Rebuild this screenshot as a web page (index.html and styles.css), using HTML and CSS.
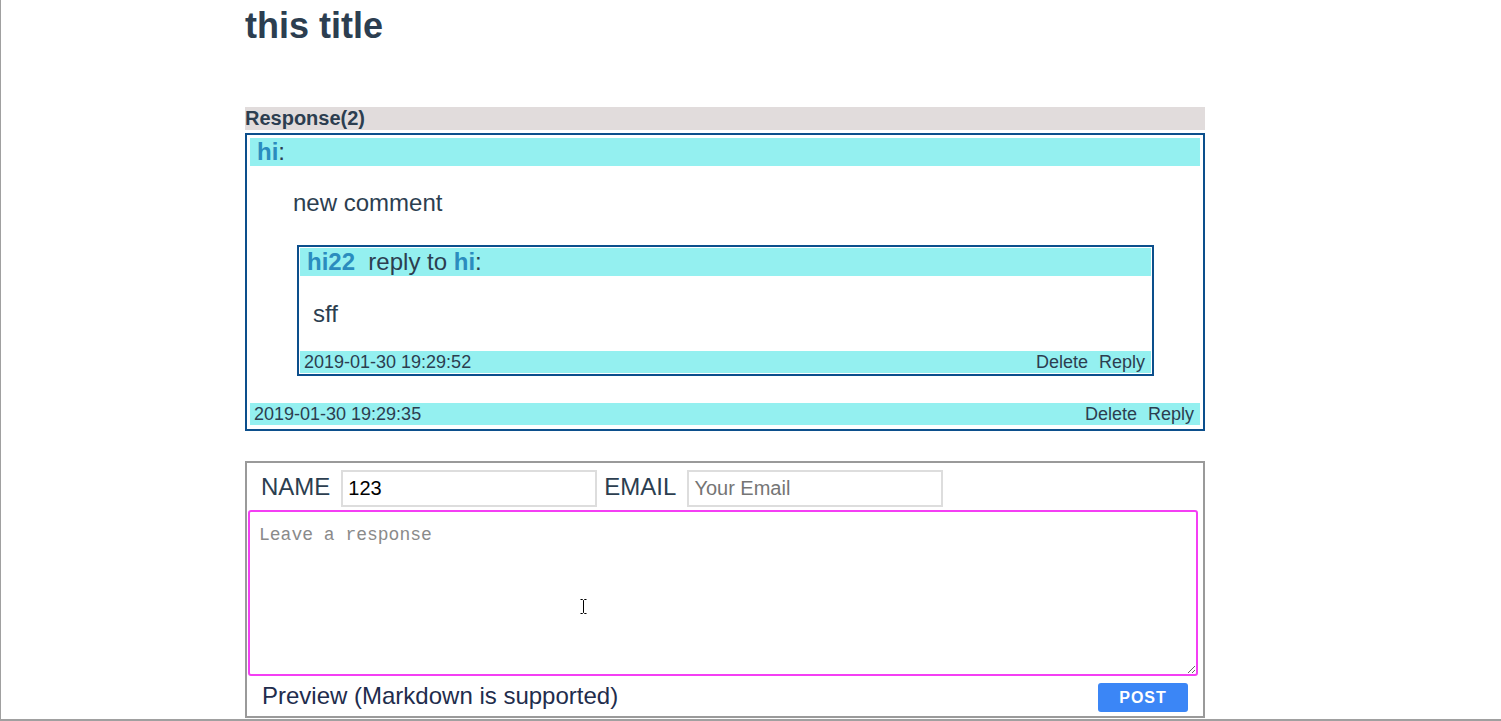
FILE: index.html
```html
<!DOCTYPE html>
<html lang="en">
<head>
<meta charset="utf-8">
<title>this title</title>
<link rel="stylesheet" href="styles.css">
</head>
<body>
<div class="frame">
  <div class="page">
    <h1 class="title">this title</h1>
    <h3 class="responses-head">Response(2)</h3>
    <div class="comment">
      <div class="comment-head"><span class="name">hi</span>:</div>
      <p class="comment-text">new comment</p>
      <div class="reply">
        <div class="comment-head"><span class="name">hi22</span>&nbsp; reply to <span class="name">hi</span>:</div>
        <p class="comment-text reply-text">sff</p>
        <div class="comment-foot reply-foot">
          <span>2019-01-30 19:29:52</span>
          <span class="actions"><a class="action">Delete</a><a class="action">Reply</a></span>
        </div>
      </div>
      <div class="comment-foot outer-foot">
        <span>2019-01-30 19:29:35</span>
        <span class="actions"><a class="action">Delete</a><a class="action">Reply</a></span>
      </div>
    </div>
    <form class="respond">
      <div class="fields">
        <label class="field-label">NAME</label>
        <input class="field-input name-input" type="text" value="123">
        <label class="field-label">EMAIL</label>
        <input class="field-input" type="text" placeholder="Your Email">
      </div>
      <textarea class="response-box" placeholder="Leave a response"></textarea>
      <div class="form-foot">
        <span class="preview">Preview (Markdown is supported)</span>
        <button class="post" type="button">POST</button>
      </div>
    </form>
  </div>
  <svg class="mouse" width="9" height="18" viewBox="0 0 9 18" aria-hidden="true">
    <path d="M1.5 1.5h2l1 1 1-1h2M4.5 2.5v12M1.5 15.5h2l1-1 1 1h2" fill="none" stroke="#fff" stroke-width="2.5"/>
    <path d="M1.5 1.5h2l1 1 1-1h2M4.5 2.5v12M1.5 15.5h2l1-1 1 1h2" fill="none" stroke="#000" stroke-width="1"/>
  </svg>
</div>
</body>
</html>
```
FILE: styles.css
```css
html, body {
  margin: 0;
  padding: 0;
  background: #fff;
}

body {
  font-family: "Liberation Sans", Arial, sans-serif;
  color: #2c3e50;
}

.frame {
  position: relative;
  height: 721px;
  box-sizing: border-box;
  border-left: 1px solid #a0a0a0;
  border-bottom: 2px solid #a0a0a0;
}

.page {
  width: 960px;
  margin-left: 244px;
  padding-top: 5px;
}

.title {
  margin: 0;
  font-size: 36px;
  line-height: 41px;
  font-weight: bold;
  color: #2c3e50;
}

.responses-head {
  margin: 61px 0 0;
  height: 23px;
  line-height: 23px;
  font-size: 20px;
  font-weight: bold;
  background: #e1dcdc;
  color: #2c3e50;
}

.comment {
  margin-top: 3px;
  border: 2px solid #0c4f8c;
  padding: 3px 3px 4px;
}

.comment-head {
  height: 28px;
  line-height: 28px;
  padding-left: 7px;
  font-size: 24px;
  background: #94f0f0;
  white-space: nowrap;
}

.name {
  font-weight: bold;
  color: #2b8cbe;
}

.comment-text {
  margin: 23px 0 0 43px;
  font-size: 24px;
  line-height: 28px;
}

.reply {
  margin: 28px 46px 0 47px;
  border: 2px solid #0c4f8c;
  padding: 1px;
}

.reply-text {
  margin: 24px 0 0 13px;
}

.comment-foot {
  display: flex;
  justify-content: space-between;
  height: 22px;
  line-height: 22px;
  padding: 0 6px 0 4px;
  font-size: 18px;
  background: #94f0f0;
}

.reply-foot {
  margin-top: 23px;
}

.outer-foot {
  margin-top: 27px;
}

.actions {
  display: flex;
  gap: 11px;
}

.action {
  color: #2c3e50;
  cursor: pointer;
}

.respond {
  margin: 30px 0 0;
  height: 257px;
  box-sizing: border-box;
  border: 2px solid #9a9a9a;
}

.fields {
  display: flex;
  align-items: flex-start;
  padding: 7px 0 0 14px;
}

.field-label {
  margin: 3px 11px 0 0;
  font-size: 24px;
  line-height: 28px;
  color: #2c3e50;
}

.field-input {
  width: 256px;
  height: 37px;
  box-sizing: border-box;
  margin: 0;
  padding: 0 5px;
  border: 2px solid #dddddd;
  font-family: "Liberation Sans", Arial, sans-serif;
  font-size: 20px;
  color: #000;
  outline: none;
}

.name-input {
  margin-right: 7px;
}

.field-input::placeholder {
  color: #757575;
}

.response-box {
  display: block;
  margin: 3px 0 0 1px;
  width: 950px;
  height: 166px;
  box-sizing: border-box;
  padding: 13px 9px;
  border: 2px solid #f43ff4;
  border-radius: 3px;
  font-family: "Liberation Mono", "Courier New", monospace;
  font-size: 18px;
  outline: none;
}

.response-box::placeholder {
  color: #8a8a8a;
}

.form-foot {
  display: flex;
  justify-content: space-between;
  align-items: flex-start;
  height: 40px;
  box-sizing: border-box;
  padding: 0 15px;
}

.preview {
  margin-top: 6px;
  font-size: 24px;
  line-height: 28px;
  color: #1f2d4d;
}

.post {
  margin-top: 7px;
  width: 90px;
  height: 29px;
  padding: 0;
  border: none;
  border-radius: 3px;
  background: #3b86f6;
  color: #fff;
  font-family: "Liberation Sans", Arial, sans-serif;
  font-size: 16px;
  font-weight: bold;
  letter-spacing: 1px;
}

.mouse {
  position: absolute;
  left: 578px;
  top: 598px;
}
```
